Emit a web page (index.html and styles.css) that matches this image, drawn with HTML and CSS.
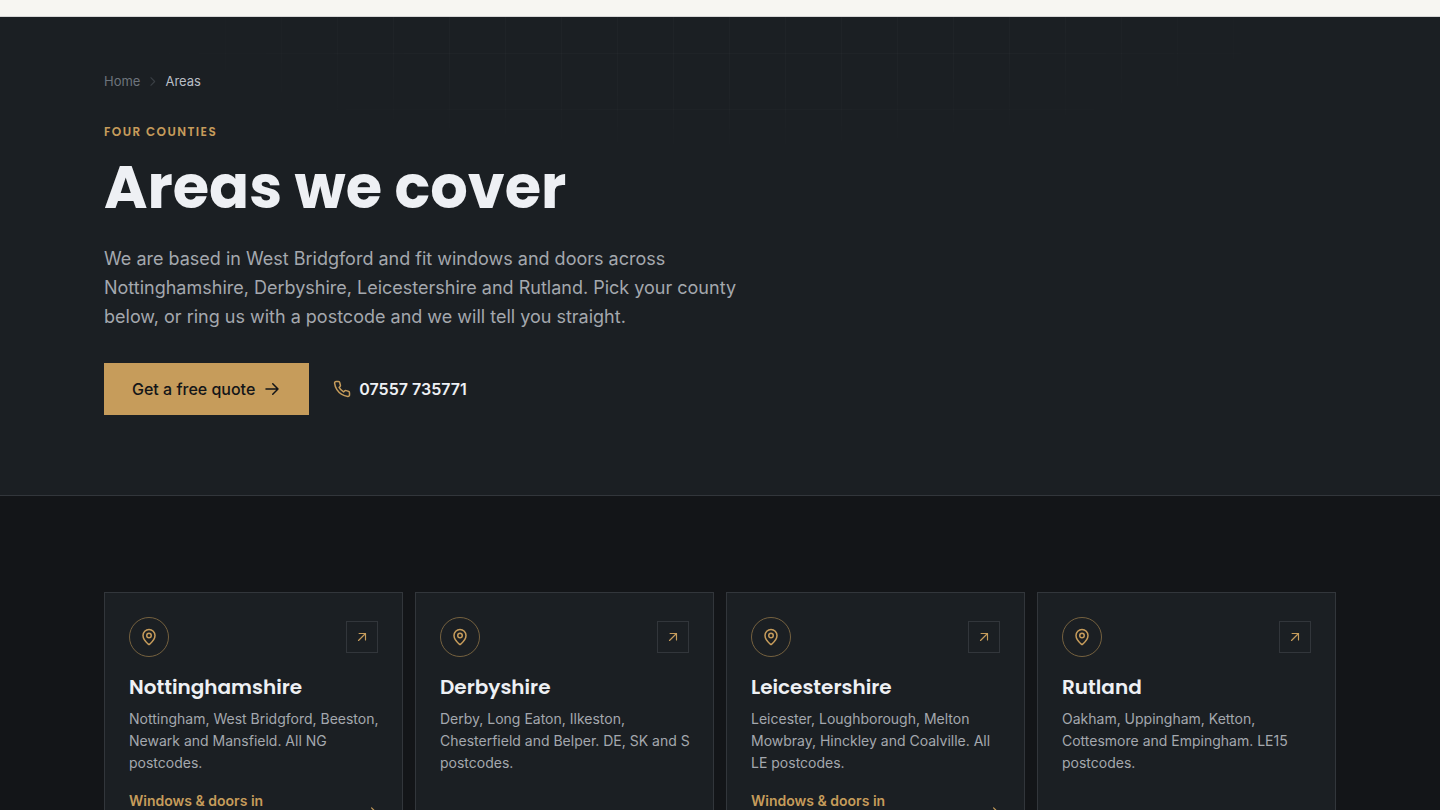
FILE: index.html
```html
<!DOCTYPE html>
<html lang="en-GB">
<head>
<meta charset="utf-8">
<meta name="viewport" content="width=device-width, initial-scale=1">
<title>Areas we cover</title>
<link rel="stylesheet" href="styles.css">
</head>
<body>
<svg class="sprite" aria-hidden="true">
  <symbol id="arrow" viewBox="0 0 24 24"><path d="M4 12h16M13 5l7 7-7 7"/></symbol>
  <symbol id="arrow-up" viewBox="0 0 24 24"><path d="M6 18 18 6M7 6h11v11"/></symbol>
  <symbol id="chevron" viewBox="0 0 24 24"><path d="m9 5 7 7-7 7"/></symbol>
  <symbol id="pin" viewBox="0 0 24 24"><path d="M20 10c0 5-5.500 10.200-7.400 11.800a1 1 0 0 1-1.200 0C9.500 20.200 4 15 4 10a8 8 0 0 1 16 0Z"/><circle cx="12" cy="10" r="3"/></symbol>
  <symbol id="phone" viewBox="0 0 24 24"><path d="M22 16.920v3a2 2 0 0 1-2.180 2 19.790 19.790 0 0 1-8.630-3.070 19.500 19.500 0 0 1-6-6 19.790 19.790 0 0 1-3.070-8.670A2 2 0 0 1 4.110 2h3a2 2 0 0 1 2 1.720c.127.960.361 1.903.700 2.810a2 2 0 0 1-.450 2.110L8.090 9.910a16 16 0 0 0 6 6l1.270-1.270a2 2 0 0 1 2.110-.450c.907.339 1.850.573 2.810.700A2 2 0 0 1 22 16.920z"/></symbol>
</svg>
<header class="topbar"></header>
<main>
  <section class="hero">
    <div class="container">
      <nav class="crumbs" aria-label="Breadcrumb">
        <a href="#">Home</a>
        <svg class="icon crumb-sep"><use href="#chevron"/></svg>
        <span class="crumb-current" aria-current="page">Areas</span>
      </nav>
      <p class="eyebrow">FOUR COUNTIES</p>
      <h1 class="title">Areas we cover</h1>
      <p class="lead">We are based in West Bridgford and fit windows and doors across Nottinghamshire, Derbyshire, Leicestershire and Rutland. Pick your county below, or ring us with a postcode and we will tell you straight.</p>
      <div class="actions">
        <a class="quote" href="#">Get a free quote <svg class="icon icon-18"><use href="#arrow"/></svg></a>
        <a class="phone" href="tel:07557735771"><svg class="icon icon-18"><use href="#phone"/></svg>07557 735771</a>
      </div>
    </div>
  </section>
  <section class="areas">
    <div class="container cards">
      <article class="card">
        <div class="card-top"><span class="badge"><svg class="icon icon-18"><use href="#pin"/></svg></span><span class="corner"><svg class="icon icon-14"><use href="#arrow-up"/></svg></span></div>
        <h2 class="card-title">Nottinghamshire</h2>
        <p class="card-text">Nottingham, West Bridgford, Beeston, Newark and Mansfield. All NG postcodes.</p>
        <a class="card-link" href="#"><span>Windows &amp; doors in Nottinghamshire</span><svg class="icon icon-14"><use href="#arrow"/></svg></a>
      </article>
      <article class="card">
        <div class="card-top"><span class="badge"><svg class="icon icon-18"><use href="#pin"/></svg></span><span class="corner"><svg class="icon icon-14"><use href="#arrow-up"/></svg></span></div>
        <h2 class="card-title">Derbyshire</h2>
        <p class="card-text">Derby, Long Eaton, Ilkeston, Chesterfield and Belper. DE, SK and S postcodes.</p>
        <a class="card-link" href="#"><span>Windows &amp; doors in Derbyshire</span><svg class="icon icon-14"><use href="#arrow"/></svg></a>
      </article>
      <article class="card">
        <div class="card-top"><span class="badge"><svg class="icon icon-18"><use href="#pin"/></svg></span><span class="corner"><svg class="icon icon-14"><use href="#arrow-up"/></svg></span></div>
        <h2 class="card-title">Leicestershire</h2>
        <p class="card-text">Leicester, Loughborough, Melton Mowbray, Hinckley and Coalville. All LE postcodes.</p>
        <a class="card-link" href="#"><span>Windows &amp; doors in Leicestershire</span><svg class="icon icon-14"><use href="#arrow"/></svg></a>
      </article>
      <article class="card">
        <div class="card-top"><span class="badge"><svg class="icon icon-18"><use href="#pin"/></svg></span><span class="corner"><svg class="icon icon-14"><use href="#arrow-up"/></svg></span></div>
        <h2 class="card-title">Rutland</h2>
        <p class="card-text">Oakham, Uppingham, Ketton, Cottesmore and Empingham. LE15 postcodes.</p>
        <a class="card-link" href="#"><span>Windows &amp; doors in Rutland</span><svg class="icon icon-14"><use href="#arrow"/></svg></a>
      </article>
    </div>
  </section>
</main>
</body>
</html>
```
FILE: styles.css
```css
:root {
  --gold: #c69c5b;
  --panel: #1b1f23;
  --line: #32363b;
  --heading: "Poppins", "Inter", sans-serif;
}
* { box-sizing: border-box; }
html { scrollbar-width: none; }
body {
  margin: 0;
  background: #131518;
  color: #eef0f4;
  font-family: "Inter", sans-serif;
}
h1, h2, p { margin: 0; }
a { color: inherit; text-decoration: none; }
.sprite { display: none; }
.icon {
  flex: none;
  fill: none;
  stroke: currentColor;
  stroke-width: 2;
  stroke-linecap: round;
  stroke-linejoin: round;
}
.icon-14 { width: 14px; height: 14px; }
.icon-18 { width: 18px; height: 18px; }
.container {
  max-width: 1296px;
  margin: 0 auto;
  padding: 0 32px;
}
.topbar {
  height: 17px;
  background: #f7f6f2;
  border-bottom: 1px solid #d6d6d6;
}

.hero {
  position: relative;
  padding: 54px 0 80px;
  background: var(--panel);
  border-bottom: 1px solid var(--line);
}
/* Faint window-pane grid, fading out from the top centre */
.hero::before {
  content: "";
  position: absolute;
  inset: 0;
  background-image:
    linear-gradient(to right, rgba(255, 255, 255, 0.02) 1px, transparent 1px),
    linear-gradient(to bottom, rgba(255, 255, 255, 0.02) 1px, transparent 1px);
  background-size: 56px 56px;
  background-position: 1px 36px;
  -webkit-mask-image: radial-gradient(ellipse 640px 150px at 50% 0, #000 50%, transparent 100%);
  mask-image: radial-gradient(ellipse 640px 150px at 50% 0, #000 50%, transparent 100%);
}
.hero .container { position: relative; }
.crumbs {
  display: flex;
  align-items: center;
  gap: 6px;
  font-size: 13px;
  line-height: 20px;
  color: #6d747c;
}
.crumb-sep { width: 13px; height: 13px; color: #3a3f45; }
.crumb-current { color: #b9bec5; }
.eyebrow {
  margin-top: 32px;
  font-family: var(--heading);
  font-size: 12px;
  font-weight: 600;
  line-height: 18px;
  letter-spacing: 0.12em;
  color: var(--gold);
}
.title {
  margin-top: 15px;
  font-family: var(--heading);
  font-size: 59px;
  font-weight: 700;
  line-height: 64px;
}
.lead {
  max-width: 640px;
  margin-top: 24px;
  font-size: 18px;
  line-height: 29px;
  color: #a4a8ae;
}
.actions {
  display: flex;
  flex-wrap: wrap;
  align-items: center;
  gap: 24px;
  margin-top: 32px;
}
.quote, .phone {
  display: inline-flex;
  align-items: center;
  gap: 8px;
  font-size: 16px;
  line-height: 24px;
}
.quote {
  padding: 14px 28px;
  background: var(--gold);
  color: #131518;
  font-weight: 500;
}
.phone { font-weight: 600; }
.phone .icon { color: var(--gold); }

.areas { padding: 96px 0; }
.cards {
  display: grid;
  grid-template-columns: repeat(auto-fit, minmax(260px, 1fr));
  gap: 12px;
}
.card {
  display: flex;
  flex-direction: column;
  padding: 24px;
  background: var(--panel);
  border: 1px solid var(--line);
}
.card-top {
  display: flex;
  align-items: center;
  justify-content: space-between;
  color: var(--gold);
}
.badge, .corner { display: grid; place-items: center; }
.badge {
  width: 40px;
  height: 40px;
  border: 1px solid #75613f;
  border-radius: 50%;
}
.corner {
  width: 32px;
  height: 32px;
  border: 1px solid var(--line);
}
.card-title {
  margin-top: 16px;
  font-family: var(--heading);
  font-size: 20px;
  font-weight: 600;
  line-height: 28px;
}
.card-text {
  margin: 7px -8px 0 0;
  font-size: 14px;
  line-height: 22px;
  color: #a4a8ae;
}
.card-link {
  display: flex;
  align-items: center;
  justify-content: space-between;
  gap: 8px;
  margin-top: auto;
  padding-top: 16px;
  font-size: 14px;
  font-weight: 600;
  line-height: 22px;
  color: var(--gold);
}
```
